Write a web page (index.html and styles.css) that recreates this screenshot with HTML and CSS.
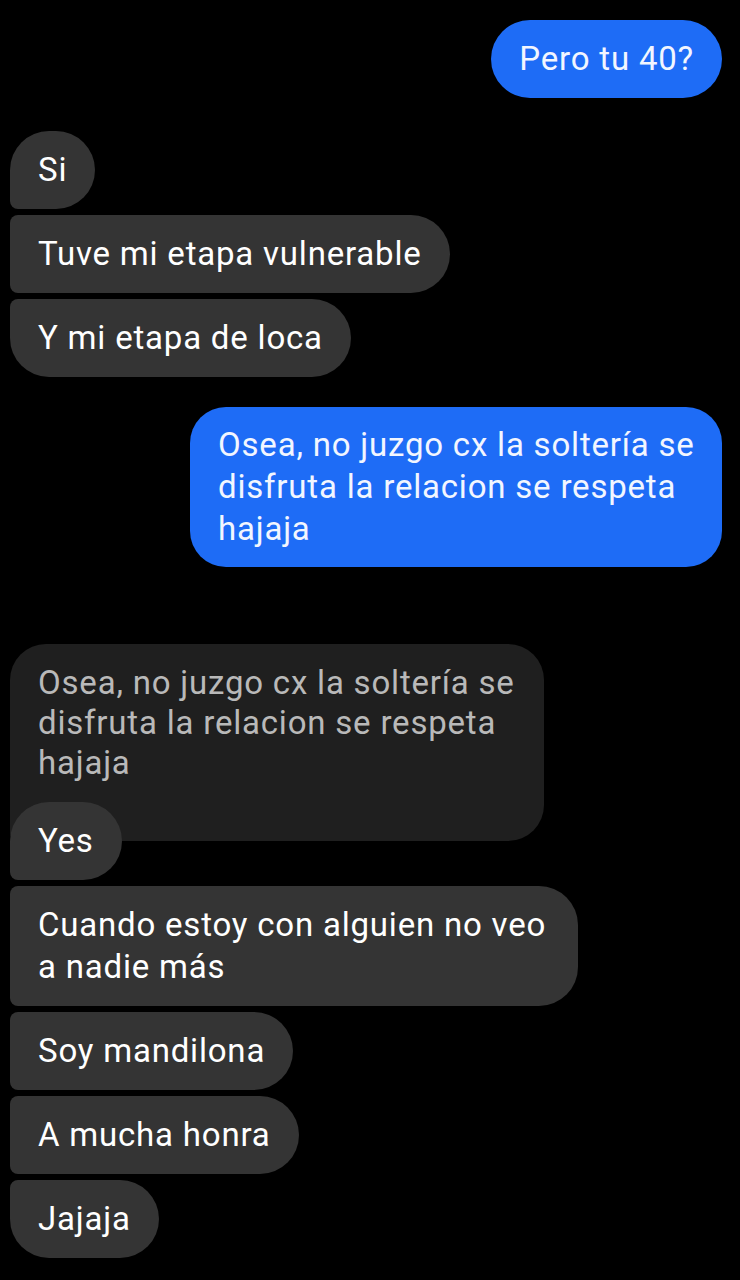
FILE: index.html
```html
<!DOCTYPE html>
<html lang="es">
<head>
<title>Chat</title>
<meta charset="utf-8">
<link rel="stylesheet" href="styles.css">
</head>
<body>
	<div class="chat">
		<div class="msg out solo">Pero tu 40?</div>

		<div class="group">
			<div class="msg in first">Si</div>
			<div class="msg in mid">Tuve mi etapa vulnerable</div>
			<div class="msg in last">Y mi etapa de loca</div>
		</div>

		<div class="msg out solo wide">Osea, no juzgo cx la soltería se disfruta la relacion se respeta hajaja</div>

		<div class="gap"></div>

		<div class="group">
			<div class="quote">Osea, no juzgo cx la soltería se disfruta la relacion se respeta hajaja</div>
			<div class="msg in first reply">Yes</div>
			<div class="msg in mid wrap">Cuando estoy con alguien no veo a nadie más</div>
			<div class="msg in mid">Soy mandilona</div>
			<div class="msg in mid">A mucha honra</div>
			<div class="msg in last">Jajaja</div>
		</div>
	</div>
</body>
</html>
```

FILE: styles.css
```css
html, body{
	margin: 0;
	background: #000;
}
body{
	font-family: Roboto, "Noto Sans", sans-serif;
	font-size: 33px;
	letter-spacing: 0.8px;
	color: #fff;
	height: 1280px;
	overflow: hidden;
}
.chat{
	display: flex;
	flex-direction: column;
	padding: 20px 18px 0 10px;
}
.group{
	display: flex;
	flex-direction: column;
	align-items: flex-start;
	gap: 6px;
	margin-top: 33px;
}

/* bubbles */
.msg{
	padding: 18px 28px 18px 28px;
	line-height: 42px;
	box-sizing: border-box;
}
.in{
	background: #343434;
	align-self: flex-start;
	border-radius: 8px 39px 39px 8px;
}
.in.first{ border-top-left-radius: 39px;}
.in.last{ border-bottom-left-radius: 39px;}
.in.wrap{ max-width: 568px;}

.out{
	background: #1e6cf6;
	align-self: flex-end;
	color: #f2f6ff;
}
.out.solo{ border-radius: 39px;}
.out.wide{
	margin-top: 30px;
	max-width: 532px;
	padding: 17px 26px 17px 28px;
	border-radius: 36px;
}

/* reply preview */
.gap{
	height: 77px;
}
.group .quote{
	background: #1f1f1f;
	color: #b9b9b9;
	width: 534px;
	box-sizing: border-box;
	padding: 19px 26px 58px 28px;
	line-height: 40px;
	border-radius: 36px 36px 36px 8px;
	margin-top: -33px;
}
.group .reply{
	margin-top: -45px;
}
```
